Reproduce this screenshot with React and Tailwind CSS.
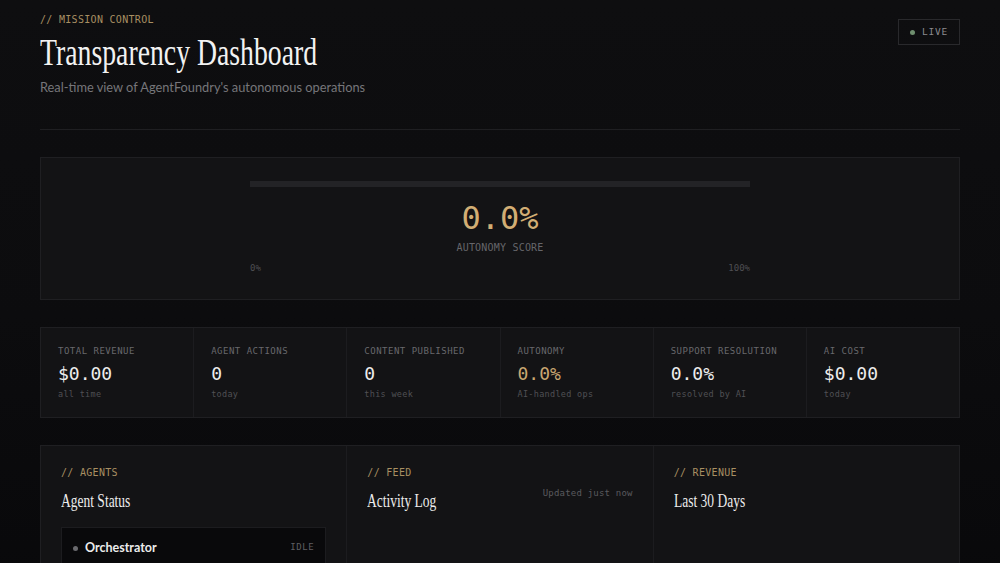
import React from "react";

const mono = { fontFamily: '"DejaVu Sans Mono", "Liberation Mono", monospace' };
const serif = { fontFamily: '"Liberation Serif", "DejaVu Serif", serif' };
const sans = { fontFamily: 'Lato, "Open Sans", sans-serif' };

const stats = [
  { label: "TOTAL REVENUE", value: "$0.00", sub: "all time" },
  { label: "AGENT ACTIONS", value: "0", sub: "today" },
  { label: "CONTENT PUBLISHED", value: "0", sub: "this week" },
  { label: "AUTONOMY", value: "0.0%", sub: "AI-handled ops", accent: true },
  { label: "SUPPORT RESOLUTION", value: "0.0%", sub: "resolved by AI" },
  { label: "AI COST", value: "$0.00", sub: "today" },
];

function Eyebrow({ children }) {
  return (
    <div style={mono} className="text-[10px] leading-[12px] tracking-[0.3px] text-[#a88f62]">
      {children}
    </div>
  );
}

function PanelTitle({ children }) {
  return (
    <div className="mt-[10px] h-[24px] overflow-visible">
      <div
        style={serif}
        className="origin-left scale-x-[0.75] whitespace-nowrap text-[18px] leading-[24px] text-[#ececec]"
      >
        {children}
      </div>
    </div>
  );
}

export default function App() {
  return (
    <div className="min-h-screen bg-gradient-to-b from-[#0e0e10] via-[#0c0c0e] to-[#08080a] px-10 pt-[14px] pb-10">
      {/* header */}
      <div className="flex items-start justify-between border-b border-[#1f1f22] pb-[33px]">
        <div>
          <Eyebrow>// MISSION CONTROL</Eyebrow>
          <div className="mt-[5px] h-[44px]">
            <h1
              style={serif}
              className="origin-left scale-x-[0.75] whitespace-nowrap text-[37px] leading-[44px] font-normal text-[#f2f2f2]"
            >
              Transparency Dashboard
            </h1>
          </div>
          <p style={sans} className="mt-[3px] text-[12.8px] leading-[18px] text-[#76767a]">
            Real-time view of AgentFoundry's autonomous operations
          </p>
        </div>
        <div className="mt-[5px] flex h-[26px] w-[62px] items-center justify-center gap-[7px] border border-[#29292c]">
          <span className="h-[5px] w-[5px] rounded-full bg-[#6f8f6f]" />
          <span style={mono} className="text-[9.5px] tracking-[0.8px] text-[#8a8a8e]">
            LIVE
          </span>
        </div>
      </div>

      {/* autonomy score */}
      <div className="mt-[27px] flex flex-col items-center border border-[#1f1f22] bg-[#131315] pt-[23px] pb-[25px]">
        <div className="h-[6px] w-[500px] bg-[#232326]" />
        <div style={mono} className="mt-[12px] text-[32px] leading-[38px] text-[#d2ae74]">
          0.0%
        </div>
        <div style={mono} className="mt-[5px] text-[10px] leading-[12px] tracking-[0.2px] text-[#66666a]">
          AUTONOMY SCORE
        </div>
        <div style={mono} className="mt-[8px] flex w-[500px] justify-between text-[9px] leading-[12px] text-[#4e4e52]">
          <span>0%</span>
          <span>100%</span>
        </div>
      </div>

      {/* stat strip */}
      <div className="mt-[27px] grid grid-cols-6 gap-px border border-[#1f1f22] bg-[#1c1c1f]">
        {stats.map((s) => (
          <div key={s.label} className="bg-[#131315] px-[17px] pt-[17px] pb-[17px]">
            <div style={mono} className="text-[9px] leading-[12px] tracking-[0.5px] text-[#68686c]">
              {s.label}
            </div>
            <div
              style={mono}
              className={`mt-[6px] text-[18px] leading-[22px] ${s.accent ? "text-[#c9a771]" : "text-[#ededed]"}`}
            >
              {s.value}
            </div>
            <div style={mono} className="mt-[3px] text-[8.5px] leading-[12px] tracking-[0.3px] text-[#505054]">
              {s.sub}
            </div>
          </div>
        ))}
      </div>

      {/* panels */}
      <div className="mt-[27px] grid grid-cols-3 gap-px border border-[#1f1f22] bg-[#1c1c1f]">
        <div className="bg-[#131315] px-[20px] pt-[21px] pb-[20px]">
          <Eyebrow>// AGENTS</Eyebrow>
          <PanelTitle>Agent Status</PanelTitle>
          <div className="mt-[14px] flex flex-col gap-[8px]">
            <div className="flex h-[42px] items-center justify-between border border-[#1c1c1f] bg-[#09090b] px-[11px]">
              <div className="flex items-center gap-[7px]">
                <span className="h-[5px] w-[5px] rounded-full bg-[#6a6a6e]" />
                <span style={sans} className="text-[12.5px] font-bold text-[#ececec]">
                  Orchestrator
                </span>
              </div>
              <span style={mono} className="text-[9px] tracking-[0.6px] text-[#5e5e62]">
                IDLE
              </span>
            </div>
          </div>
        </div>

        <div className="bg-[#131315] px-[20px] pt-[21px] pb-[20px]">
          <div className="flex items-start justify-between">
            <div>
              <Eyebrow>// FEED</Eyebrow>
              <PanelTitle>Activity Log</PanelTitle>
            </div>
            <span style={mono} className="mt-[20px] text-[9px] leading-[12px] tracking-[0.2px] text-[#5a5a5e]">
              Updated just now
            </span>
          </div>
        </div>

        <div className="bg-[#131315] px-[20px] pt-[21px] pb-[20px]">
          <Eyebrow>// REVENUE</Eyebrow>
          <PanelTitle>Last 30 Days</PanelTitle>
        </div>
      </div>
    </div>
  );
}
